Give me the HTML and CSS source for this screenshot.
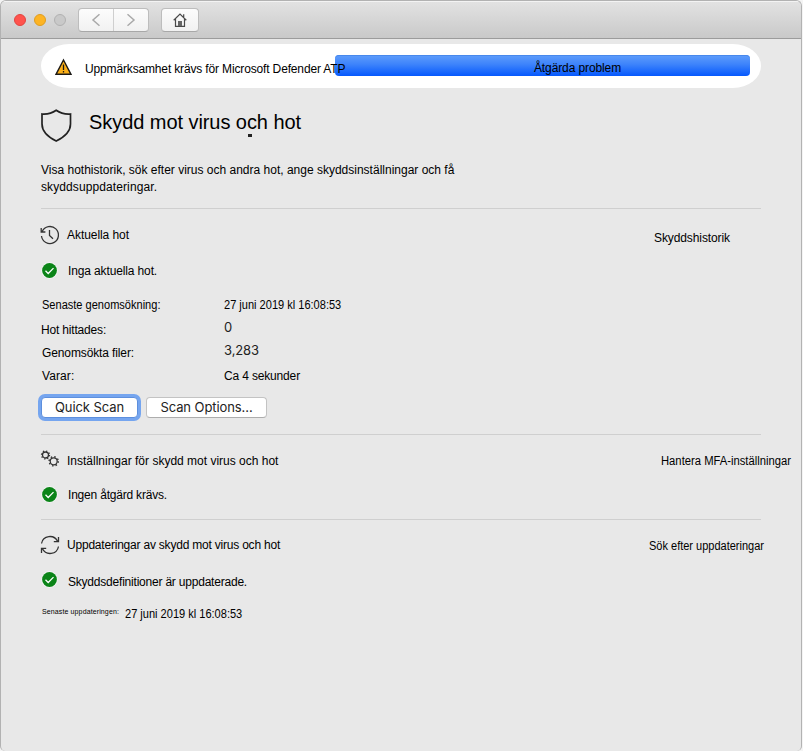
FILE: index.html
```
<!DOCTYPE html>
<html lang="sv">
<head>
<meta charset="utf-8">
<title>Skydd mot virus och hot</title>
<link rel="stylesheet" href="styles.css">
</head>
<body>
<div class="window">
  <header class="titlebar">
    <span class="light red"></span><span class="light amber"></span><span class="light idle"></span>
    <div class="nav">
      <span class="nav-btn"><svg width="10" height="14" viewBox="0 0 10 14"><path d="M8.500 1.200 2 7l6.500 5.800" fill="none" stroke="#a9a9a9" stroke-width="1.500"/></svg></span>
      <span class="nav-btn"><svg width="10" height="14" viewBox="0 0 10 14"><path d="m1.500 1.200 6.500 5.800-6.500 5.800" fill="none" stroke="#a9a9a9" stroke-width="1.500"/></svg></span>
    </div>
    <span class="home"><svg width="14" height="14" viewBox="0 0 14 14"><path d="M.7 7.200 7 1l6.300 6.200M2.500 6v7.300h9V6M10.700 4V1.200" fill="none" stroke="#4a4a4a" stroke-width="1.200"/><path d="M5 8h4v5H5z" fill="#666"/></svg></span>
  </header>

  <main>
    <div class="banner">
      <svg class="warn" width="18" height="18" viewBox="0 0 18 18"><path d="M8.500 2 16 16.300H1z" fill="#fbaf17" stroke="#1c1a17" stroke-width="1.400"/><path d="M8.500 6.500v5.500M8.500 13v1.600" stroke="#1c1a17" stroke-width="1.300"/></svg>
      <span class="banner-text">Uppmärksamhet krävs för Microsoft Defender ATP</span>
      <button class="fix"><span>Åtgärda problem</span></button>
    </div>

    <div class="heading">
      <svg width="32" height="34" viewBox="0 0 32 34"><path d="M1 5C6.500 5.400 11 4.300 15.200 1.300 19.500 4.300 24 5.400 29.500 5v10c0 7.500-6 13-14.300 17C7 28 1 22.500 1 15z" fill="none" stroke="#222" stroke-width="1.700"/></svg>
      <h1>Skydd mot virus och hot</h1>
    </div>
    <p class="intro">Visa hothistorik, sök efter virus och andra hot, ange skyddsinställningar och få<br><span class="intro-end">skyddsuppdateringar.</span></p>

    <section class="threats">
      <div class="row">
        <svg class="icon" width="20" height="20" viewBox="1 0 20 20"><path d="M2.200 6.500A8.500 8.500 0 1 1 1.500 11M1.200 3v4h4.200M9.500 5v5.500l3.500 3.200" fill="none" stroke="#333" stroke-width="1.300"/></svg>
        <h2 class="s-threat">Aktuella hot</h2>
        <a class="link history">Skyddshistorik</a>
      </div>
      <div class="row status">
        <svg class="icon" width="17" height="17" viewBox="0 0 17 17"><circle cx="8.500" cy="8.500" r="8.200" fill="#f6f6f6"/><circle cx="8.500" cy="8.500" r="7.400" fill="#0b8418"/><path d="m4.500 8.800 2.700 2.700 5.300-5.400" fill="none" stroke="#fff" stroke-width="1.300"/></svg>
        <span class="s-none">Inga aktuella hot.</span>
      </div>
      <dl>
        <dt class="narrow">Senaste genomsökning:</dt><dd class="narrow">27 juni 2019 kl 16:08:53</dd>
        <dt class="s-found">Hot hittades:</dt><dd class="num">0</dd>
        <dt class="s-files">Genomsökta filer:</dt><dd class="num">3,283</dd>
        <dt class="s-lasts">Varar:</dt><dd class="s-secs">Ca 4 sekunder</dd>
      </dl>
      <div class="buttons"><button class="btn quick">Quick Scan</button><button class="btn options">Scan Options...</button></div>
    </section>

    <section class="settings">
      <div class="row">
        <svg class="icon" width="20" height="20" viewBox="1 0 20 20" fill="none" stroke="#333"><circle cx="5.500" cy="6" r="3" stroke-width="1.300"/><circle cx="5.500" cy="6" r="4" stroke-width="1.300" stroke-dasharray="1.300 1.842"/><circle cx="13.700" cy="12.300" r="3.500" stroke-width="1.300"/><circle cx="13.700" cy="12.300" r="4.600" stroke-width="1.400" stroke-dasharray="1.500 2.113"/></svg>
        <h2>Inställningar för skydd mot virus och hot</h2>
        <a class="link manage">Hantera MFA-inställningar</a>
      </div>
      <div class="row status">
        <svg class="icon" width="17" height="17" viewBox="0 0 17 17"><circle cx="8.500" cy="8.500" r="8.200" fill="#f6f6f6"/><circle cx="8.500" cy="8.500" r="7.400" fill="#0b8418"/><path d="m4.500 8.800 2.700 2.700 5.300-5.400" fill="none" stroke="#fff" stroke-width="1.300"/></svg>
        <span class="s-action">Ingen åtgärd krävs.</span>
      </div>
    </section>

    <section class="updates">
      <div class="row">
        <svg class="icon" width="20" height="20" viewBox="1 0 20 20" fill="none" stroke="#333" stroke-width="1.300"><path d="M1.500 8.500C3 .3 14 -1 17.700 6.500M18.500 2v4.700h-4.700M18.500 11.500C17 19.700 6 21 2.300 13.500M1.500 18v-4.700h4.700"/></svg>
        <h2 class="s-upd">Uppdateringar av skydd mot virus och hot</h2>
        <a class="link check">Sök efter uppdateringar</a>
      </div>
      <div class="row status">
        <svg class="icon" width="17" height="17" viewBox="0 0 17 17"><circle cx="8.500" cy="8.500" r="8.200" fill="#f6f6f6"/><circle cx="8.500" cy="8.500" r="7.400" fill="#0b8418"/><path d="m4.500 8.800 2.700 2.700 5.300-5.400" fill="none" stroke="#fff" stroke-width="1.300"/></svg>
        <span class="s-def">Skyddsdefinitioner är uppdaterade.</span>
      </div>
      <div class="last"><span class="tiny">Senaste uppdateringen:</span><span class="narrow">27 juni 2019 kl 16:08:53</span></div>
    </section>
  </main>
</div>
</body>
</html>
```
FILE: styles.css
```
* { box-sizing: border-box; }
html, body { height: 100%; }
body { margin: 0; background: #f4f4f4; overflow: hidden; font: 12px/16px "Liberation Sans", Arial, sans-serif; color: #000; }
h1, h2, p, dl, dd { margin: 0; font-weight: normal; }
svg { display: block; flex: none; overflow: visible; }
span, a, h2, dt, dd { white-space: nowrap; }
button { font: inherit; color: inherit; padding: 0; }

.window { width: 802px; height: 751px; background: #e8e8e8; border: 1px solid #b2b2b2; border-bottom: 0; border-radius: 6px 6px 5px 5px; overflow: hidden; }

.titlebar { height: 38px; display: flex; align-items: center; padding: 0 13px; background: linear-gradient(#e2e2e2, #c9c9c9); border-top: 1px solid #f3f3f3; border-bottom: 1px solid #9c9c9c; }
.light { width: 12px; height: 12px; border-radius: 50%; margin: 0 8px 0 0; border: 1px solid; }
.red { background: #ff534d; border-color: #e2443f; }
.amber { background: #fdb424; border-color: #df9d20; }
.idle { background: #c9c9c9; border-color: #b1b1b1; }
.nav { display: flex; width: 71px; height: 24px; margin-left: 4px; border-radius: 4px; background: linear-gradient(#fcfcfc, #f1f1f1); border: 1px solid #bdbdbd; border-bottom-color: #a8a8a8; }
.nav-btn { flex: 1; display: flex; align-items: center; justify-content: center; }
.nav-btn + .nav-btn { border-left: 1px solid #cfcfcf; }
.home { width: 38px; height: 24px; margin-left: 12px; display: flex; align-items: center; justify-content: center; border-radius: 4px; background: linear-gradient(#fcfcfc, #f1f1f1); border: 1px solid #bdbdbd; border-bottom-color: #a8a8a8; }

main { padding: 5px 0 0 40px; width: 760px; }

.banner { height: 44px; display: flex; background: #fff; border-radius: 28px / 22px; padding: 11px 11px 0 14px; }
.warn { margin-top: 3px; }
.banner-text { width: 250px; margin: 6px 0 0 12px; letter-spacing: -.15px; position: relative; z-index: 1; }
.fix { flex: 1; height: 21px; border: 0; border-radius: 4px; background: linear-gradient(#5f9dfb, #3d83fb 45%, #0558fd); box-shadow: inset 0 1px 0 #4888ec; }
.fix span { display: block; margin: 4px 0 0 70px; line-height: 16px; letter-spacing: -.11px; }

.heading { display: flex; margin-top: 21px; height: 34px; }
h1 { position: relative; margin: 1px 0 0 16px; font-size: 20px; line-height: 24px; letter-spacing: -.06px; height: 24px; white-space: nowrap; }
h1::after { content: ""; position: absolute; left: 159px; top: 24px; width: 4px; height: 3px; background: #222; }
.intro { margin-top: 19px; line-height: 17px; height: 47px; border-bottom: 1px solid #cfcfcf; white-space: nowrap; }
.intro-end { letter-spacing: .1px; }

section { display: flow-root; }
.threats { height: 226px; border-bottom: 1px solid #cfcfcf; padding-top: 18px; }
.settings { height: 85px; border-bottom: 1px solid #cfcfcf; padding-top: 18px; }
.updates { padding-top: 17px; }
.row { display: flex; height: 16px; }
.row h2 { font-size: 12px; line-height: 16px; margin-left: 6px; }
.row .icon { margin-top: -2px; }
.status { margin-top: 20px; }
.status .icon { margin: -1px 10px 0 0; }
.settings .status { margin-top: 18px; }
.settings .row:first-child .icon { margin-top: -4px; }
.settings .status .icon { margin-top: -1px; }
.updates .status { margin-top: 21px; }
.updates .status .icon { margin-top: -3px; }
.link { margin-left: auto; }
.history { width: 107px; margin-top: 3px; letter-spacing: -.1px; }
.manage { width: 100px; transform: scaleX(.937); transform-origin: left; }
.check { width: 112px; margin-top: 1px; transform: scaleX(.917); transform-origin: left; }

dl { display: grid; grid-template-columns: 182px auto; grid-template-rows: 25px 23px 23px 29px; margin: 18px 0 0 1px; }
.narrow { transform: scaleX(.92); transform-origin: left; }
.num { font: 13px/16px Inter, sans-serif; margin-top: -3px; color: #222; letter-spacing: -.1px; }
.s-found { letter-spacing: -.18px; margin-left: -1px; }
.s-files { letter-spacing: -.12px; }
.s-lasts { letter-spacing: .1px; }
.s-secs { letter-spacing: -.16px; }
.s-threat { letter-spacing: -.06px; }
.s-none { letter-spacing: -.13px; }
.s-action { letter-spacing: -.2px; }
.s-upd, .s-def { letter-spacing: -.21px; }

.buttons { display: flex; gap: 8px; }
.btn { height: 21px; border: 1px solid #c3c3c3; border-bottom-color: #adadad; border-radius: 4px; background: #fff; font: 13px/19px Inter, sans-serif; color: #222; letter-spacing: -.08px; }
.quick { width: 97px; border-color: #5d8fdd; box-shadow: 0 0 0 3px #75a5ef; }
.options { width: 121px; }

.last { display: flex; margin: 16px 0 0 1px; }
.tiny { font-size: 7px; line-height: 10px; margin-top: 1px; width: 83px; letter-spacing: .12px; }
```
